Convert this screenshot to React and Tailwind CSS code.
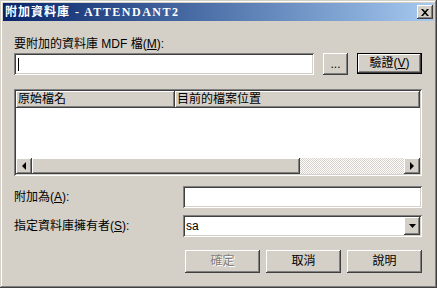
import React from "react";

const raised =
  "bg-[#d4d0c8] shadow-[inset_-1px_-1px_#404040,inset_1px_1px_#ffffff,inset_-2px_-2px_#808080,inset_2px_2px_#d4d0c8]";
const sunken =
  "bg-white shadow-[inset_1px_1px_#808080,inset_-1px_-1px_#ffffff,inset_2px_2px_#404040,inset_-2px_-2px_#d4d0c8]";

function Arrow({ dir }) {
  const pts = {
    left: "4,0 4,8 0,4",
    right: "0,0 0,8 4,4",
    down: "0,0 7,0 3.5,4",
  }[dir];
  const w = dir === "down" ? 7 : 4;
  const h = dir === "down" ? 4 : 8;
  return (
    <svg width={w} height={h} viewBox={`0 0 ${w} ${h}`}>
      <polygon points={pts} fill="#000" />
    </svg>
  );
}

function Btn({ children, className = "", disabled = false, isDefault = false }) {
  return (
    <div className={`flex items-center justify-center ${className} ${isDefault ? "border border-black" : ""}`}>
      <div
        className={`w-full h-full flex items-center justify-center ${raised} ${
          disabled ? "text-[#808080] [text-shadow:1px_1px_#ffffff]" : "text-black"
        }`}
      >
        {children}
      </div>
    </div>
  );
}

export default function App() {
  return (
    <div
      className="w-[437px] h-[288px] bg-[#d4d0c8] p-[3px] flex flex-col text-[12px] leading-[13px] text-black shadow-[inset_-1px_-1px_#404040,inset_1px_1px_#d4d0c8,inset_-2px_-2px_#808080,inset_2px_2px_#ffffff]"
      style={{ fontFamily: '"Liberation Sans", "Noto Sans CJK TC", sans-serif' }}
    >
      {/* 標題列 */}
      <div className="h-[18px] flex items-center justify-between bg-gradient-to-r from-[#0a246a] to-[#a6caf0] pl-[2px] pr-[1px]">
        <span
          className="text-white font-bold text-[12px] whitespace-nowrap pt-[1px]"
          style={{ fontFamily: '"Liberation Serif", "Noto Sans CJK TC", serif' }}
        >
          <span className="tracking-[1px]">附加資料庫</span>
          <span className="mx-[5px]">-</span>
          <span className="tracking-[1.5px]">ATTENDANT2</span>
        </span>
        <div className={`w-[16px] h-[14px] flex items-center justify-center ${raised}`}>
          <svg width="8" height="7" viewBox="0 0 8 7">
            <path d="M0 0h2l2 2.3L6 0h2L5 3.5 8 7H6L4 4.7 2 7H0l3-3.5z" fill="#000" />
          </svg>
        </div>
      </div>

      <div className="flex flex-col pl-[11px] pr-[12px]">
        <div className="mt-[17px] h-[13px] whitespace-nowrap">
          要附加的資料庫 MDF 檔(<span className="underline">M</span>):
        </div>

        <div className="mt-[2px] flex h-[22px] gap-[9px]">
          <div className={`w-[300px] h-full ${sunken} flex items-center pl-[4px]`}>
            <div className="w-px h-[13px] bg-black" />
          </div>
          <Btn className="w-[25px] h-full">...</Btn>
          <Btn className="w-[65px] h-[21px]" isDefault>
            驗證(<span className="underline">V</span>)
          </Btn>
        </div>

        {/* 清單 */}
        <div className={`mt-[14px] h-[87px] p-[2px] flex flex-col ${sunken}`}>
          <div className="flex h-[17px]">
            <div className={`w-[159px] h-full pl-[2px] flex items-center ${raised} shadow-[inset_-1px_-1px_#000000,inset_1px_1px_#ffffff,inset_-2px_-2px_#808080]`}>
              原始檔名
            </div>
            <div className={`flex-1 h-full pl-[2px] flex items-center ${raised} shadow-[inset_-1px_-1px_#000000,inset_1px_1px_#ffffff,inset_-2px_-2px_#808080]`}>
              目前的檔案位置
            </div>
          </div>
          <div className="flex-1 bg-white" />
          <div className="flex h-[16px]">
            <div className={`w-[16px] h-full flex items-center justify-center ${raised}`}>
              <Arrow dir="left" />
            </div>
            <div className={`w-[268px] h-full ${raised}`} />
            <div className="flex-1 h-full bg-[repeating-conic-gradient(#ffffff_0_25%,#d4d0c8_0_50%)] bg-[length:2px_2px]" />
            <div className={`w-[16px] h-full flex items-center justify-center ${raised}`}>
              <Arrow dir="right" />
            </div>
          </div>
        </div>

        <div className="mt-[10px] flex items-center h-[22px]">
          <div className="w-[169px] whitespace-nowrap">
            附加為(<span className="underline">A</span>):
          </div>
          <div className={`flex-1 h-full ${sunken}`} />
        </div>

        <div className="mt-[7px] flex items-center h-[22px]">
          <div className="w-[169px] whitespace-nowrap">
            指定資料庫擁有者(<span className="underline">S</span>):
          </div>
          <div className={`flex-1 h-full ${sunken} p-[2px] flex items-center`}>
            <span className="flex-1 pl-[1px]">sa</span>
            <div className={`w-[16px] h-full flex items-center justify-center ${raised}`}>
              <Arrow dir="down" />
            </div>
          </div>
        </div>

        <div className="mt-[13px] flex justify-end gap-[6px] h-[23px]">
          <Btn className="w-[75px] h-full" disabled>確定</Btn>
          <Btn className="w-[75px] h-full">取消</Btn>
          <Btn className="w-[75px] h-full">說明</Btn>
        </div>
      </div>
    </div>
  );
}
